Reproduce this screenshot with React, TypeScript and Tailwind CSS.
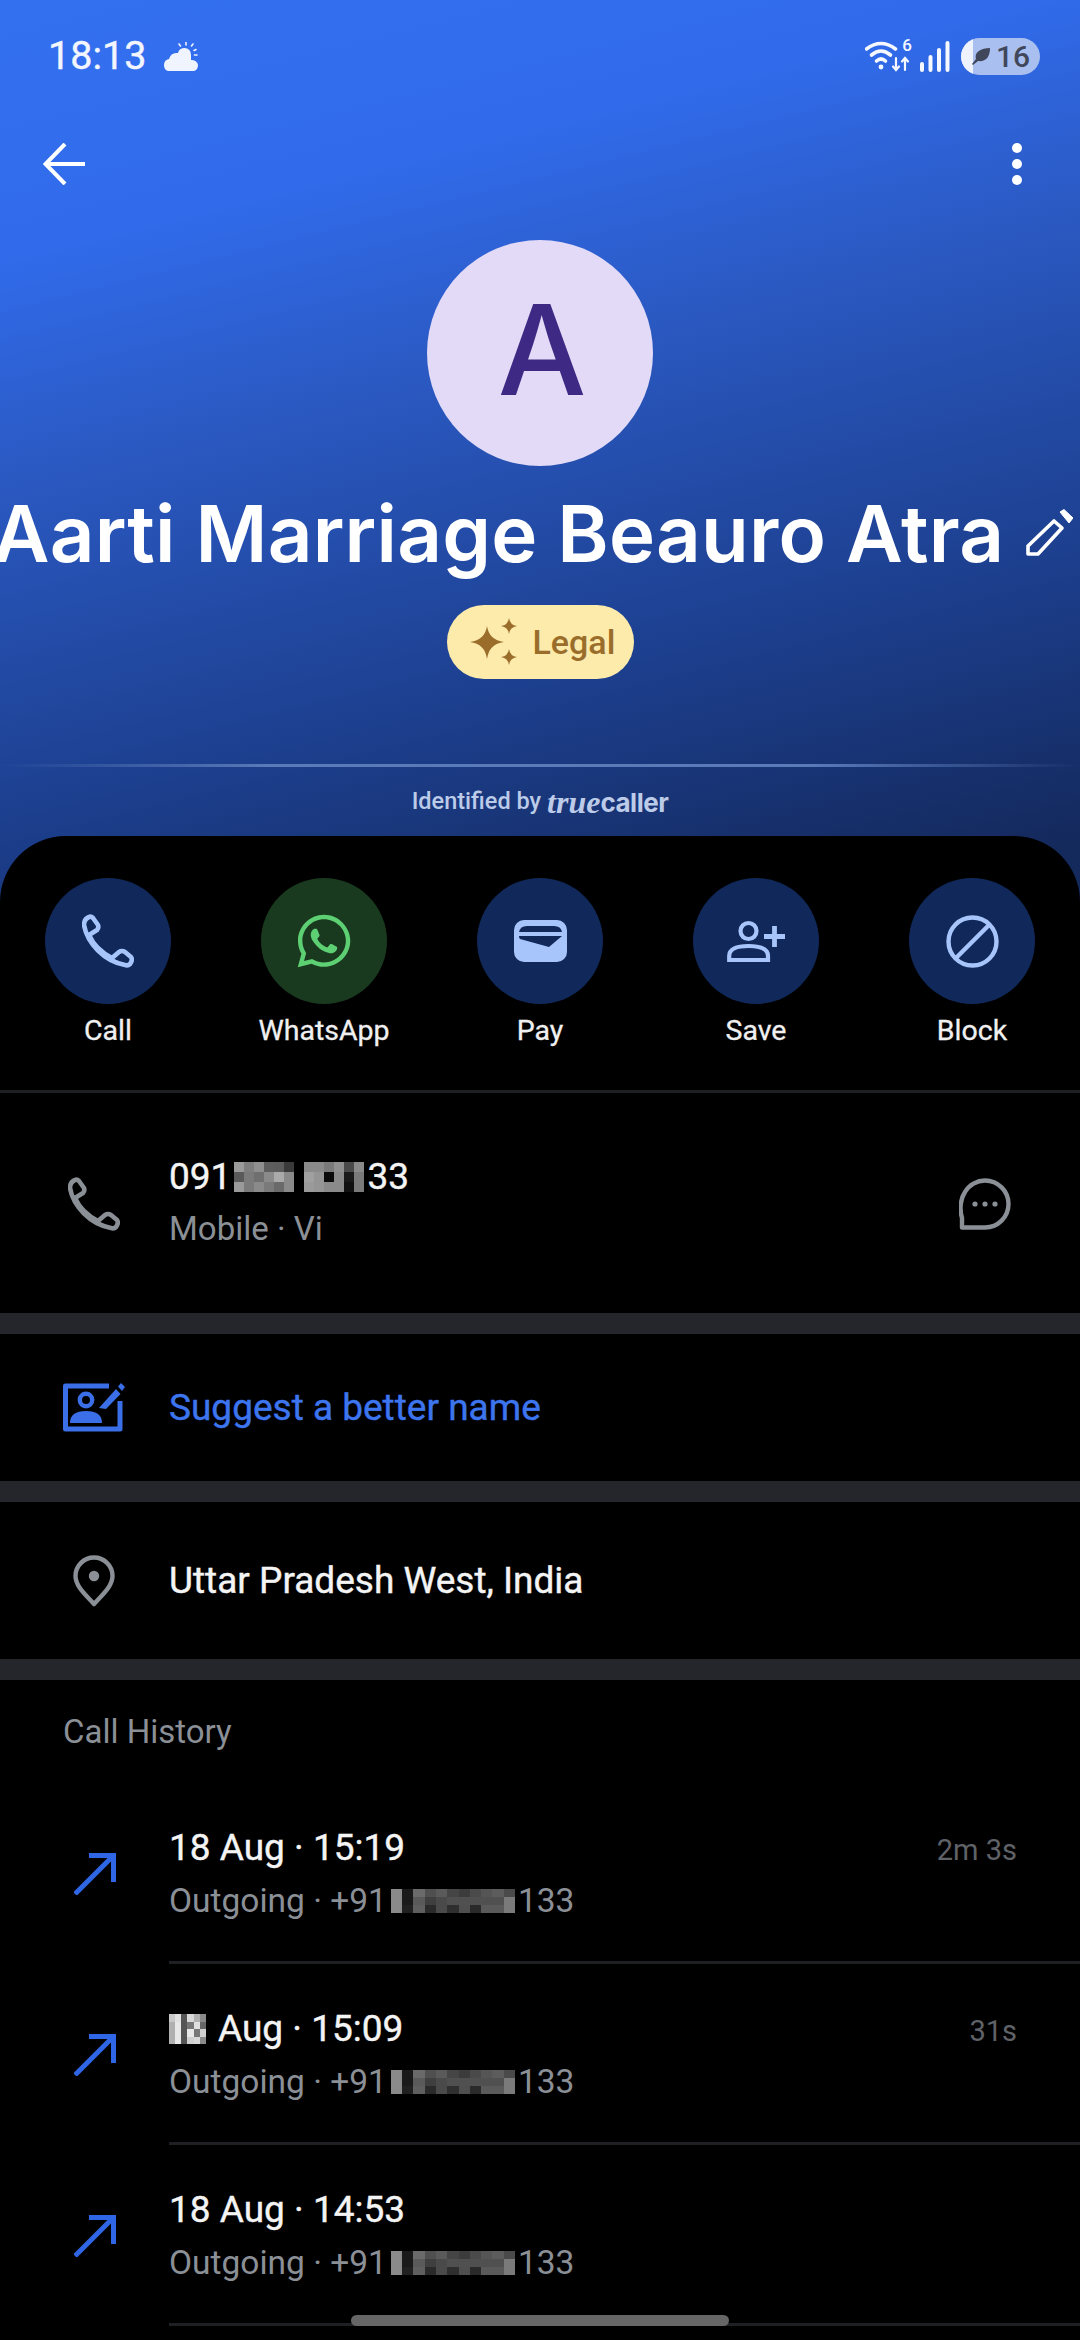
import React from "react";
import { FaWhatsapp } from "react-icons/fa";

const roboto = "font-['Roboto',sans-serif]";

function PhoneIcon({ className, color }: { className: string; color: string }) {
  return (
    <svg viewBox="0 0 52 54" className={className} fill="none" stroke={color} strokeWidth="4.6" strokeLinejoin="round" strokeLinecap="round">
      <path d="M7 3 Q9 2 11 4 L16 11 Q17 14 15 16 L7 21 C11 30 20 39 30 44 L37 38 Q40 36 43 38 L49 43 Q51 46 48 50 Q46 52 43 51 C22 47 5 29 2 11 Q2 5 7 3 Z" />
    </svg>
  );
}

function ArrowOut() {
  return (
    <svg viewBox="0 0 42 42" className="w-[42px] h-[42px]" fill="none" stroke="#2f66e6" strokeWidth="5">
      <path d="M1 41 L39 3" />
      <path d="M15 2.5 H39.5 V29" />
    </svg>
  );
}

function Mosaic({ className, rows }: { className: string; rows: string[][] }) {
  return (
    <div className={className}>
      {rows.flat().map((c, i) => (
        <div key={i} style={{ backgroundColor: c }} />
      ))}
    </div>
  );
}

const numA = [
  ["#9a9a9a", "#7e7e7e", "#8f8f8f", "#5e5e5e", "#5c5c5c", "#3a3a3a"],
  ["#5a5a5a", "#7a7a7a", "#6f6f6f", "#8a8a8a", "#aaaaaa", "#8a8a8a"],
  ["#9a9a9a", "#7a7a7a", "#8a8a8a", "#7a7a7a", "#6a6a6a", "#8a8a8a"],
];
const numB = [
  ["#8a8a8a", "#8a8a8a", "#7a7a7a", "#909090", "#4a4a4a", "#8a8a8a"],
  ["#a0a0a0", "#959595", "#0a0a0a", "#8a8a8a", "#1a1a1a", "#7a7a7a"],
  ["#9a9a9a", "#959595", "#8a8a8a", "#8a8a8a", "#111111", "#7a7a7a"],
];
const outMosaic = [
  ["#8a8a8a", "#1a1a1a", "#6a6a6a", "#4f4f4f", "#5a5a5a", "#454545", "#3c3c3c", "#4a4a4a", "#555555", "#5c5c5c", "#4a4a4a"],
  ["#8a8a8a", "#1a1a1a", "#5a5a5a", "#3f3f3f", "#4a4a4a", "#505050", "#505050", "#505050", "#505050", "#505050", "#7a7a7a"],
  ["#8a8a8a", "#202020", "#5f5f5f", "#2a2a2a", "#4a4a4a", "#2f2f2f", "#4f4f4f", "#2a2a2a", "#5a5a5a", "#5a5a5a", "#7a7a7a"],
];
const dayMosaic = [
  ["#c8c8c8", "#e0e0e0", "#555555", "#d8d8d8", "#b0b0b0", "#8a8a8a"],
  ["#b0b0b0", "#e8e8e8", "#555555", "#777777", "#e0e0e0", "#666666"],
  ["#b0b0b0", "#e8e8e8", "#555555", "#e8e8e8", "#777777", "#d0d0d0"],
  ["#b0b0b0", "#e8e8e8", "#555555", "#d0d0d0", "#d8d8d8", "#8a8a8a"],
];

function Action({ label, bg, children }: { label: string; bg: string; children: React.ReactNode }) {
  return (
    <div className="flex flex-col items-center">
      <div className={`w-[126px] h-[126px] rounded-full flex items-center justify-center ${bg}`}>{children}</div>
      <div className="mt-[7px] text-[28.5px] leading-[40px] [-webkit-text-stroke:0.3px] text-[#f0f0f0]">{label}</div>
    </div>
  );
}

function CallRow({ date, time, duration, blurDay }: { date: string; time: string; duration?: string; blurDay?: boolean }) {
  return (
    <div className="flex h-[181px]">
      <div className="w-[169px] shrink-0 pl-[74px] pt-[70px]">
        <ArrowOut />
      </div>
      <div className="flex-1 border-b-[3px] border-[#1f2024] flex justify-between pr-[63px] pt-[41px]">
        <div>
          <div className="flex items-center text-[37px] [-webkit-text-stroke:0.4px] leading-[48px] text-[#f4f4f4] h-[48px]">
            {blurDay ? (
              <>
                <Mosaic className="grid grid-cols-6 grid-rows-4 w-[37px] h-[30px] mr-[12px]" rows={dayMosaic} />
                <span>{date.slice(3)} · {time}</span>
              </>
            ) : (
              <span>{date} · {time}</span>
            )}
          </div>
          <div className="mt-[5px] flex items-center h-[48px] text-[33.5px] text-[#8b8f96]">
            <span>Outgoing · +91</span>
            <Mosaic className="grid grid-cols-11 grid-rows-3 w-[124px] h-[25px] ml-[4px]" rows={outMosaic} />
            <span className="ml-[3px]">133</span>
          </div>
        </div>
        {duration && <div className="text-[29px] leading-[48px] h-[48px] mt-[2px] text-[#5f6267]">{duration}</div>}
      </div>
    </div>
  );
}

export default function App() {
  return (
    <div className={`relative w-[1080px] h-[2340px] overflow-hidden bg-black ${roboto}`}>
      <header className="h-[902px] w-[1080px] bg-[linear-gradient(166deg,#3370ef_0%,#316beb_22%,#2b5ac4_40%,#1c3e8c_71%,#14295c_95%)] text-white">
        <div className="h-[112px] flex items-center justify-between pl-[48px] pr-[40px]">
          <div className="flex items-center">
            <span className="text-[39.5px] [-webkit-text-stroke:0.4px] text-[#f3f6fe]">18:13</span>
            <svg viewBox="0 0 34 29" className="w-[34px] h-[29px] ml-[18px]" fill="#f0f4fe">
              <path d="M4 29 Q0 28 0 23 Q0 18 5 17 Q7 10 14 11 Q15 6 21 6 Q27 7 27 13 L27 18 Q33 18 34 23 Q34 28 30 29 Z" />
              <g stroke="#f0f4fe" strokeWidth="1.6" strokeLinecap="round">
                <path d="M22 0.5 V3" />
                <path d="M15 2 L16.5 4" />
                <path d="M29 2 L27.5 4" />
                <path d="M32 7.5 L30 8.5" />
                <path d="M33 13 H30.5" />
              </g>
            </svg>
          </div>
          <div className="flex items-center">
            <div className="relative w-[46px] h-[32px]">
              <svg viewBox="0 0 46 32" className="w-[46px] h-[32px]" fill="none" stroke="#f5f8ff" strokeWidth="3.6" strokeLinecap="round">
                <path d="M1.5 9 Q16 -2 30.5 9" />
                <path d="M6.5 15 Q16 7 25.5 15" />
                <path d="M11.5 21 Q16 17 20.5 21" />
                <circle cx="16" cy="27" r="2.4" fill="#f5f8ff" stroke="none" />
                <path d="M31 18 V30 M28 26.5 L31 30 L34 26.5" strokeWidth="2.2" />
                <path d="M40 30 V18 M37 21.5 L40 18 L43 21.5" strokeWidth="2.2" />
              </svg>
              <span className="absolute right-[-1px] top-[-3px] text-[17px] leading-[17px] font-medium text-[#f5f8ff]">6</span>
            </div>
            <svg viewBox="0 0 30 31" className="w-[30px] h-[31px] ml-[9px]" fill="#f5f8ff">
              <rect x="0" y="21" width="4" height="10" rx="2" />
              <rect x="8.5" y="14" width="4" height="17" rx="2" />
              <rect x="17" y="7" width="4" height="24" rx="2" />
              <rect x="25.5" y="0" width="4" height="31" rx="2" />
            </svg>
            <div className="relative ml-[11px] w-[79px] h-[37px] rounded-full bg-[#a9bff0] overflow-hidden flex items-center">
              <div className="absolute left-0 top-0 h-full w-[12px] bg-[#eef2fd]" />
              <svg viewBox="0 0 20 20" className="relative w-[20px] h-[20px] ml-[10px]" fill="#41475a">
                <path d="M19 2 C19 12 14 16 7 15 L2 19 L1 18 L5 13 C3 6 10 2 19 2 Z" />
              </svg>
              <span className="relative ml-[5px] text-[30px] leading-[37px] font-medium text-[#41475a]">16</span>
            </div>
          </div>
        </div>

        <div className="h-[104px] flex items-center justify-between pl-[43px] pr-[58px]">
          <svg viewBox="0 0 42 42" className="w-[42px] h-[42px]" fill="none" stroke="#ffffff" strokeWidth="4">
            <path d="M42 21 H3" />
            <path d="M22 1 L2.5 21 L22 41" />
          </svg>
          <div className="flex flex-col gap-[6px]">
            <div className="w-[10px] h-[10px] rounded-full bg-white" />
            <div className="w-[10px] h-[10px] rounded-full bg-white" />
            <div className="w-[10px] h-[10px] rounded-full bg-white" />
          </div>
        </div>

        <div className="mt-[24px] mx-auto w-[226px] h-[226px] rounded-full bg-[#e2daf6] flex items-center justify-center pb-[8px] pl-[4px]">
          <span className="font-['Inter',sans-serif] text-[125px] leading-none font-medium text-[#3e2a85]">A</span>
        </div>

        <div className="mt-[24px] h-[88px] flex items-center justify-center pr-[14px] whitespace-nowrap">
          <span className="shrink-0 font-['Inter',sans-serif] text-[78px] leading-[88px] font-semibold tracking-[0.2px] text-white">Aarti Marriage Beauro Atra</span>
          <svg viewBox="0 0 47 47" className="shrink-0 w-[47px] h-[47px] ml-[22px] -mt-[4px]" fill="none" stroke="#ffffff" strokeWidth="3.6" strokeLinejoin="round">
            <path d="M2 37 L28 12 L36 19 L12 45 L2 45 Z" />
            <path d="M34 3 L38 0.5 L47 9 L43 14 Z" fill="#ffffff" strokeWidth="1" />
          </svg>
        </div>

        <div className="mt-[27px] mx-auto w-[187px] h-[74px] rounded-full bg-[#fcebab] flex items-center pl-[23px]">
          <svg viewBox="0 0 48 48" className="w-[48px] h-[48px] shrink-0" fill="#9a6d2b">
            <path d="M17 8 Q19 22 34 24 Q19 26 17 41 Q15 26 0 24 Q15 22 17 8 Z" />
            <path d="M39 0 Q40 7 47 8 Q40 9 39 16 Q38 9 31 8 Q38 7 39 0 Z" />
            <path d="M39 31 Q40 38 47 39 Q40 40 39 47 Q38 40 31 39 Q38 38 39 31 Z" />
          </svg>
          <span className="ml-[15px] text-[34px] leading-[40px] font-medium text-[#9a6d2b]">Legal</span>
        </div>

        <div className="mt-[85px] h-[3px] w-full bg-[linear-gradient(90deg,transparent,#5a7ab8_25%,#5a7ab8_75%,transparent)]" />

        <div className="mt-[15px] h-[40px] flex items-center justify-center text-[#bccbe8]">
          <span className="text-[23.5px] font-medium">Identified by</span>
          <span className="ml-[6px] font-['Liberation_Serif',serif] italic font-bold text-[32px] leading-[40px]">true</span>
          <span className="font-['Inter',sans-serif] text-[26px] font-bold tracking-[-0.5px]">caller</span>
        </div>
      </header>

      <main className="relative -mt-[66px] rounded-t-[66px] bg-black text-white">
        <section className="h-[257px] border-b-[3px] border-[#1f2024] pt-[42px] grid grid-cols-5">
          <Action label="Call" bg="bg-[#10295a]">
            <PhoneIcon className="w-[52px] h-[54px]" color="#a8c5fb" />
          </Action>
          <Action label="WhatsApp" bg="bg-[#1a3a1f]">
            <FaWhatsapp className="w-[60px] h-[60px] text-[#5ed074]" />
          </Action>
          <Action label="Pay" bg="bg-[#10295a]">
            <svg viewBox="0 0 53 42" className="w-[53px] h-[42px]">
              <rect width="53" height="42" rx="10" fill="#a8c5fb" />
              <path d="M5 12 Q6 6 13 6 H40 Q47 6 48 12 Z" fill="#10295a" />
              <path d="M5 16 H48 L35 27 L6 19 Q5 18 5 16 Z" fill="#10295a" />
            </svg>
          </Action>
          <Action label="Save" bg="bg-[#10295a]">
            <svg viewBox="0 0 58 42" className="w-[58px] h-[42px]" fill="none" stroke="#a8c5fb" strokeWidth="4.2">
              <circle cx="21.5" cy="11" r="8" />
              <path d="M2.2 40 V36 Q2.2 26 21.5 26 Q41 26 41 36 V40 Z" />
              <path d="M37 16.5 H58 M47.5 6 V27" strokeWidth="4.8" />
            </svg>
          </Action>
          <Action label="Block" bg="bg-[#10295a]">
            <svg viewBox="0 0 53 53" className="w-[53px] h-[53px]" fill="none" stroke="#a8c5fb" strokeWidth="4.4">
              <circle cx="26.5" cy="26.5" r="24" />
              <path d="M10 43 L43 10" />
            </svg>
          </Action>
        </section>

        <section className="h-[220px] flex pt-[60px]">
          <div className="w-[169px] shrink-0 pl-[68px] pt-[24px]">
            <PhoneIcon className="w-[52px] h-[54px]" color="#8b8f96" />
          </div>
          <div className="flex-1">
            <div className="flex items-center h-[48px] text-[37px] [-webkit-text-stroke:0.4px] text-[#f4f4f4]">
              <span>091</span>
              <Mosaic className="grid grid-cols-6 grid-rows-3 w-[60px] h-[30px] ml-[3px]" rows={numA} />
              <Mosaic className="grid grid-cols-6 grid-rows-3 w-[60px] h-[30px] ml-[10px]" rows={numB} />
              <span className="ml-[3px]">33</span>
            </div>
            <div className="mt-[4px] text-[33px] leading-[48px] text-[#8b8f96]">Mobile · Vi</div>
          </div>
          <div className="pr-[69px] pt-[25px]">
            <svg viewBox="0 0 52 52" className="w-[52px] h-[52px]" fill="none" stroke="#8b8f96" strokeWidth="4.4" strokeLinejoin="round">
              <path d="M26 2.5 C39 2.5 49.5 13 49.5 26 C49.5 39 39 49.5 26 49.5 H3 V40 C0 30 2 20 6 14 C10 7 18 2.5 26 2.5 Z" />
              <circle cx="16" cy="26" r="2.6" fill="#8b8f96" stroke="none" />
              <circle cx="26" cy="26" r="2.6" fill="#8b8f96" stroke="none" />
              <circle cx="36" cy="26" r="2.6" fill="#8b8f96" stroke="none" />
            </svg>
          </div>
        </section>

        <div className="h-[21px] bg-[#25262b]" />

        <section className="h-[147px] flex items-center">
          <div className="w-[169px] shrink-0 pl-[63px]">
            <svg viewBox="0 0 62 49" className="w-[62px] h-[49px]" fill="none" stroke="#3a6fe8" strokeWidth="5" strokeLinejoin="round">
              <path d="M46 3 H2.5 V46 H57 V18" />
              <circle cx="23" cy="17" r="6.2" strokeWidth="4.4" />
              <path d="M7 40 Q7 28 23 28 Q39 28 39 40 Z" fill="#3a6fe8" stroke="none" />
              <path d="M36 25 L53 6 L57.5 11 L43 26 Z" fill="#3a6fe8" stroke="none" />
              <path d="M55 3.5 L58 0 L62 4 L59 8 Z" fill="#3a6fe8" stroke="none" />
            </svg>
          </div>
          <span className="text-[37px] [-webkit-text-stroke:0.4px] leading-[48px] text-[#3d75ee]">Suggest a better name</span>
        </section>

        <div className="h-[21px] bg-[#25262b]" />

        <section className="h-[157px] flex items-center">
          <div className="w-[169px] shrink-0 pl-[73px]">
            <svg viewBox="0 0 42 52" className="w-[42px] h-[52px]" fill="none" stroke="#8b8f96" strokeWidth="4.4" strokeLinejoin="round">
              <path d="M21 49 C12 39 2.5 31 2.5 21 C2.5 10.5 11 2.5 21 2.5 C31 2.5 39.5 10.5 39.5 21 C39.5 31 30 39 21 49 Z" />
              <circle cx="21" cy="21" r="5.2" fill="#8b8f96" stroke="none" />
            </svg>
          </div>
          <span className="text-[37px] [-webkit-text-stroke:0.4px] leading-[48px] text-[#f4f4f4]">Uttar Pradesh West, India</span>
        </section>

        <div className="h-[21px] bg-[#25262b]" />

        <section>
          <div className="h-[103px] flex items-center pl-[63px] text-[33px] text-[#8b8f96]">Call History</div>
          <CallRow date="18 Aug" time="15:19" duration="2m 3s" />
          <CallRow date="18 Aug" time="15:09" duration="31s" blurDay />
          <CallRow date="18 Aug" time="14:53" />
        </section>
      </main>

      <div className="absolute left-[351px] top-[2315px] w-[378px] h-[11px] rounded-full bg-[#666666]" />
    </div>
  );
}
